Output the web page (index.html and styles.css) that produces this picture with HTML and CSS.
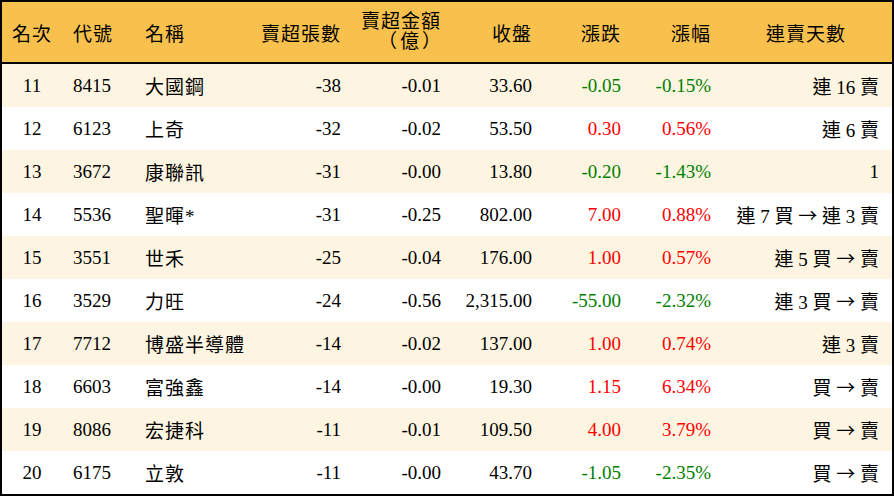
FILE: index.html
```html
<!DOCTYPE html>
<html lang="zh-Hant">
<head>
<meta charset="utf-8">
<title>賣超排行</title>
<link rel="stylesheet" href="styles.css">
</head>
<body>
<div class="board">
  <div class="row head">
    <div class="c c-rank">名次</div>
    <div class="c c-code">代號</div>
    <div class="c c-name">名稱</div>
    <div class="c num">賣超張數</div>
    <div class="c num two">賣超金額<br><span class="unit">（億）</span></div>
    <div class="c num">收盤</div>
    <div class="c num">漲跌</div>
    <div class="c num">漲幅</div>
    <div class="c c-days">連賣天數</div>
  </div>
  <div class="row alt">
    <div class="c c-rank">11</div><div class="c c-code">8415</div><div class="c c-name">大國鋼</div>
    <div class="c num">-38</div><div class="c num">-0.01</div><div class="c num">33.60</div>
    <div class="c num dn">-0.05</div><div class="c num dn">-0.15%</div><div class="c num days">連 16 賣</div>
  </div>
  <div class="row">
    <div class="c c-rank">12</div><div class="c c-code">6123</div><div class="c c-name">上奇</div>
    <div class="c num">-32</div><div class="c num">-0.02</div><div class="c num">53.50</div>
    <div class="c num up">0.30</div><div class="c num up">0.56%</div><div class="c num days">連 6 賣</div>
  </div>
  <div class="row alt">
    <div class="c c-rank">13</div><div class="c c-code">3672</div><div class="c c-name">康聯訊</div>
    <div class="c num">-31</div><div class="c num">-0.00</div><div class="c num">13.80</div>
    <div class="c num dn">-0.20</div><div class="c num dn">-1.43%</div><div class="c num days">1</div>
  </div>
  <div class="row">
    <div class="c c-rank">14</div><div class="c c-code">5536</div><div class="c c-name">聖暉*</div>
    <div class="c num">-31</div><div class="c num">-0.25</div><div class="c num">802.00</div>
    <div class="c num up">7.00</div><div class="c num up">0.88%</div><div class="c num days">連 7 買 <span class="arrow">→</span> 連 3 賣</div>
  </div>
  <div class="row alt">
    <div class="c c-rank">15</div><div class="c c-code">3551</div><div class="c c-name">世禾</div>
    <div class="c num">-25</div><div class="c num">-0.04</div><div class="c num">176.00</div>
    <div class="c num up">1.00</div><div class="c num up">0.57%</div><div class="c num days">連 5 買 <span class="arrow">→</span> 賣</div>
  </div>
  <div class="row">
    <div class="c c-rank">16</div><div class="c c-code">3529</div><div class="c c-name">力旺</div>
    <div class="c num">-24</div><div class="c num">-0.56</div><div class="c num">2,315.00</div>
    <div class="c num dn">-55.00</div><div class="c num dn">-2.32%</div><div class="c num days">連 3 買 <span class="arrow">→</span> 賣</div>
  </div>
  <div class="row alt">
    <div class="c c-rank">17</div><div class="c c-code">7712</div><div class="c c-name">博盛半導體</div>
    <div class="c num">-14</div><div class="c num">-0.02</div><div class="c num">137.00</div>
    <div class="c num up">1.00</div><div class="c num up">0.74%</div><div class="c num days">連 3 賣</div>
  </div>
  <div class="row">
    <div class="c c-rank">18</div><div class="c c-code">6603</div><div class="c c-name">富強鑫</div>
    <div class="c num">-14</div><div class="c num">-0.00</div><div class="c num">19.30</div>
    <div class="c num up">1.15</div><div class="c num up">6.34%</div><div class="c num days">買 <span class="arrow">→</span> 賣</div>
  </div>
  <div class="row alt">
    <div class="c c-rank">19</div><div class="c c-code">8086</div><div class="c c-name">宏捷科</div>
    <div class="c num">-11</div><div class="c num">-0.01</div><div class="c num">109.50</div>
    <div class="c num up">4.00</div><div class="c num up">3.79%</div><div class="c num days">買 <span class="arrow">→</span> 賣</div>
  </div>
  <div class="row">
    <div class="c c-rank">20</div><div class="c c-code">6175</div><div class="c c-name">立敦</div>
    <div class="c num">-11</div><div class="c num">-0.00</div><div class="c num">43.70</div>
    <div class="c num dn">-1.05</div><div class="c num dn">-2.35%</div><div class="c num days">買 <span class="arrow">→</span> 賣</div>
  </div>
</div>
</body>
</html>
```

FILE: styles.css
```css
html, body {
  margin: 0;
  padding: 0;
  background: #ffffff;
}

.board {
  width: 894px;
  height: 496px;
  box-sizing: border-box;
  border: 2px solid #000;
  font-family: "Liberation Serif", "Noto Sans CJK TC", serif;
  font-size: 19px;
  color: #000;
  background: #fff;
  overflow: hidden;
}

.row {
  display: grid;
  grid-template-columns: 60px 73px 115px 100px 100px 91px 89px 90px 172px;
  align-items: center;
  height: 43px;
  background: #ffffff;
}

.row.alt {
  background: #fdf5e1;
}

.row.head {
  height: 60px;
  background: #f8c14e;
  border-bottom: 2px solid #000;
  letter-spacing: 1px;
}

.c {
  white-space: nowrap;
}

.c-rank {
  text-align: center;
}

.c-code {
  padding-left: 11px;
}

.c-name {
  padding-left: 10px;
  letter-spacing: 1px;
}

.num {
  text-align: right;
  padding-right: 9px;
}

.two {
  line-height: 20px;
}

.unit {
  letter-spacing: 3px;
  margin-right: -3px;
}

.c-days {
  text-align: center;
}

.days {
  padding-right: 13px;
}

.arrow {
  font-family: "Noto Sans CJK TC", sans-serif;
  font-size: 19px;
  line-height: 1;
}

.up {
  color: #ff0000;
}

.dn {
  color: #008000;
}
```
